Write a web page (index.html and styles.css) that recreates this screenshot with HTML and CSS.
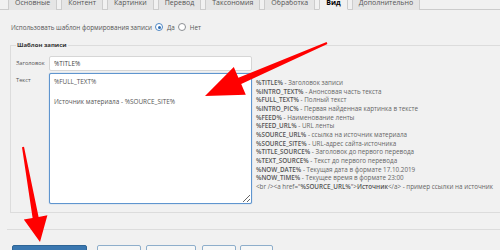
FILE: index.html
```html
<!DOCTYPE html>
<html lang="ru">
	<head>
		<meta charset="UTF-8" />
		<title>Шаблон записи</title>
		<link rel="stylesheet" href="styles.css">
	</head>
	<body>
		<nav class="tabs">
			<a class="tab">Основные</a>
			<a class="tab">Контент</a>
			<a class="tab">Картинки</a>
			<a class="tab">Перевод</a>
			<a class="tab">Таксономия</a>
			<a class="tab">Обработка</a>
			<a class="tab active">Вид</a>
			<a class="tab">Дополнительно</a>
		</nav>

		<div class="option">
			<span>Использовать шаблон формирования записи</span>
			<label class="choice"><span class="radio checked"></span>Да</label>
			<label class="choice"><span class="radio"></span>Нет</label>
		</div>

		<fieldset class="template">
			<legend>Шаблон записи</legend>
			<div class="template-grid">
				<label class="field-label">Заголовок</label>
				<input class="field-input" type="text" value="%TITLE%">

				<label class="field-label">Текст</label>
				<textarea class="field-text">%FULL_TEXT%

Источник материала - %SOURCE_SITE%</textarea>
				<ul class="vars">
					<li><b>%TITLE%</b> - Заголовок записи</li>
					<li><b>%INTRO_TEXT%</b> - Анонсовая часть текста</li>
					<li><b>%FULL_TEXT%</b> - Полный текст</li>
					<li><b>%INTRO_PIC%</b> - Первая найденная картинка в тексте</li>
					<li><b>%FEED%</b> - Наименование ленты</li>
					<li><b>%FEED_URL%</b> - URL ленты</li>
					<li><b>%SOURCE_URL%</b> - ссылка на источник материала</li>
					<li><b>%SOURCE_SITE%</b> - URL-адрес сайта-источника</li>
					<li><b>%TITLE_SOURCE%</b> - Заголовок до первого перевода</li>
					<li><b>%TEXT_SOURCE%</b> - Текст до первого перевода</li>
					<li><b>%NOW_DATE%</b> - Текущая дата в формате 17.10.2019</li>
					<li><b>%NOW_TIME%</b> - Текущее время в формате 23:00</li>
					<li>&lt;br /&gt;&lt;a href="<b>%SOURCE_URL%</b>"&gt;<b>Источник</b>&lt;/a&gt; - пример ссылки на источник</li>
				</ul>
			</div>
		</fieldset>

		<div class="divider"></div>

		<div class="actions">
			<button class="button primary">Сохранить</button>
			<button class="button btn-cancel">Отмена</button>
			<button class="button btn-check">Проверить</button>
			<button class="button btn-export">Экспорт</button>
			<button class="button btn-log">Лог</button>
		</div>

		<!-- стрелки поверх скриншота -->
		<svg class="arrows" width="500" height="250" viewBox="0 0 500 250" aria-hidden="true">
			<polygon fill="#ff0000" points="326.6,42.1 238.4,77.7 233.8,67.1 205,96 245.8,94.7 241.2,84.1 327.4,43.9" />
			<polygon fill="#ff0000" points="22,147.2 32.6,217.9 23.8,219.5 40,242 47.4,215.3 38.6,216.9 24,146.8" />
		</svg>
	</body>
</html>
```

FILE: styles.css
```css
body {
	margin: 0;
	background: #f1f1f1;
	color: #444;
	font-family: "Open Sans", "Noto Sans", sans-serif;
	font-size: 6.3px;
	overflow: hidden;
	position: relative;
	height: 250px;
}

/* вкладки */
.tabs {
	display: flex;
	gap: 4px;
	margin-top: -5px;
	padding-left: 8px;
	border-bottom: 1px solid #ccc;
}

.tab {
	background: #e5e5e5;
	border: 1px solid #ccc;
	border-bottom: none;
	color: #555;
	font-size: 7px;
	line-height: 13px;
	padding: 0 6px;
	margin-bottom: -1px;
}

.tab.active {
	background: #f1f1f1;
	border-bottom: 1px solid #f1f1f1;
	color: #000;
	font-weight: 700;
}

/* переключатель */
.option {
	display: flex;
	align-items: center;
	height: 14px;
	margin: 10px 0 0 11px;
	color: #555;
}

.choice {
	display: flex;
	align-items: center;
	margin-left: 3px;
}

.radio {
	width: 6px;
	height: 6px;
	border: 1px solid #8c8f94;
	border-radius: 50%;
	background: #fff;
	margin-right: 4px;
	display: flex;
	align-items: center;
	justify-content: center;
}

.radio.checked {
	border-color: #4d86c4;
}

.radio.checked::after {
	content: "";
	width: 3px;
	height: 3px;
	border-radius: 50%;
	background: #2e6db4;
}

/* шаблон */
.template {
	margin: 5px -20px 0 10px;
	padding: 5px 0 8px 5px;
	border: 1px solid #dcdcdc;
	min-width: 0;
}

.template legend {
	font-size: 6px;
	font-weight: 700;
	color: #333;
	line-height: 12px;
	padding: 0 1px;
}

.template-grid {
	display: grid;
	grid-template-columns: 33px 203px 1fr;
	grid-template-rows: 15px 131px;
	row-gap: 2px;
}

.field-label {
	color: #555;
	font-size: 5.7px;
	line-height: 15px;
}

.field-input {
	box-sizing: border-box;
	width: 203px;
	height: 15px;
	margin: 0;
	border: 1px solid #d6d6d6;
	border-radius: 2px;
	background: #fff;
	color: #444;
	font-family: inherit;
	font-size: 6.4px;
	padding: 0 4px;
	grid-column: 2 / 4;
}

.field-text {
	box-sizing: border-box;
	width: 203px;
	height: 131px;
	margin: 0;
	border: 1px solid #5f95cf;
	box-shadow: 0 0 1px #5f95cf;
	border-radius: 2px;
	background: #fff;
	color: #555;
	font-family: inherit;
	font-size: 6.4px;
	line-height: 10px;
	padding: 3px 4px;
	resize: both;
}

.vars {
	list-style: none;
	margin: 0;
	padding: 6px 0 0 4px;
	font-size: 6.3px;
	line-height: 8.65px;
	color: #666;
	white-space: nowrap;
}

.vars b {
	font-weight: 600;
	color: #555;
}

.divider {
	margin: 16px 0 0 7px;
	border-top: 1px solid #dcdcdc;
}

.actions {
	display: flex;
	margin: 15px 0 0 12px;
}

.button {
	height: 20px;
	padding: 6px 0 0;
	border: 1px solid #8eaecb;
	border-radius: 2px;
	background: #f6f7f7;
	color: #2271b1;
	font-family: inherit;
	font-size: 6px;
}

.button.primary {
	width: 75px;
	background: #3a77b0;
	border-color: #2e6596;
	color: #fff;
}

.btn-cancel {
	width: 44px;
	margin-left: 10px;
}

.btn-check {
	width: 50px;
	margin-left: 5px;
}

.btn-export {
	width: 34px;
	margin-left: 6px;
}

.btn-log {
	width: 33px;
	margin-left: 4px;
}

.arrows {
	position: absolute;
	top: 0;
	left: 0;
	pointer-events: none;
}
```
